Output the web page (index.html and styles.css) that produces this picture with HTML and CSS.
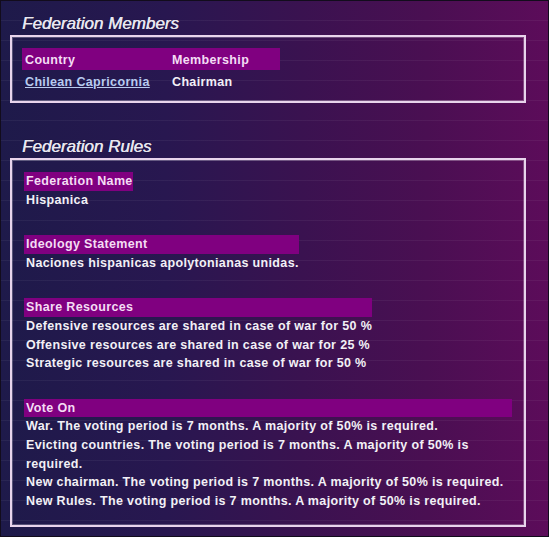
FILE: index.html
```html
<!DOCTYPE html>
<html>
<head>
<meta charset="utf-8">
<link rel="stylesheet" href="styles.css">
</head>
<body>
<div class="frame">
  <h2 class="title title-members">Federation Members</h2>
  <div class="box box-members">
    <table class="members">
      <thead>
        <tr><th class="col-country">Country</th><th class="col-member">Membership</th></tr>
      </thead>
      <tbody>
        <tr><td><a class="link" href="#">Chilean Capricornia</a></td><td>Chairman</td></tr>
      </tbody>
    </table>
  </div>

  <h2 class="title title-rules">Federation Rules</h2>
  <div class="box box-rules">
    <div class="rule">
      <div class="bar">Federation Name</div>
      <div class="line">Hispanica</div>
    </div>
    <div class="rule">
      <div class="bar">Ideology Statement</div>
      <div class="line">Naciones hispanicas apolytonianas unidas.</div>
    </div>
    <div class="rule">
      <div class="bar">Share Resources</div>
      <div class="line">Defensive resources are shared in case of war for 50 %</div>
      <div class="line">Offensive resources are shared in case of war for 25 %</div>
      <div class="line">Strategic resources are shared in case of war for 50 %</div>
    </div>
    <div class="rule">
      <div class="bar">Vote On</div>
      <div class="line">War. The voting period is 7 months. A majority of 50% is required.</div>
      <div class="line">Evicting countries. The voting period is 7 months. A majority of 50% is required.</div>
      <div class="line">New chairman. The voting period is 7 months. A majority of 50% is required.</div>
      <div class="line">New Rules. The voting period is 7 months. A majority of 50% is required.</div>
    </div>
  </div>
</div>
</body>
</html>
```

FILE: styles.css
```css
html, body {
  margin: 0;
  padding: 0;
}
body {
  background: #000;
}
.frame {
  box-sizing: border-box;
  width: 549px;
  height: 537px;
  border: 1px solid #120c1c;
  background:
    repeating-linear-gradient(to bottom, rgba(255,255,255,0) 0px, rgba(255,255,255,0) 19px, rgba(255,255,255,0.05) 19px, rgba(255,255,255,0.05) 20px),
    linear-gradient(to right, #1e1a4a 0%, #281750 30%, #3a1250 55%, #4a0f52 78%, #5c0c5a 100%);
  padding: 9px 22px 0 9px;
  font-family: "Liberation Sans", Arial, sans-serif;
  color: #ecebf2;
}
.title {
  margin: 0;
  font-size: 17px;
  font-style: italic;
  font-weight: normal;
  line-height: 22px;
  color: #e8e6f0;
  padding-left: 12px;
  text-shadow: 0.4px 0 0 #e8e6f0, 0 0 1px rgba(0,0,0,0.6);
}
.title-members {
  height: 25px;
  padding-top: 3px;
  box-sizing: border-box;
}
.title-rules {
  margin-top: 30px;
  height: 25px;
  padding-top: 3px;
  box-sizing: border-box;
}
.box {
  border: 2px solid #e8d4ec;
  box-shadow: inset 0 0 0 1px rgba(255,255,255,0.25);
}
.box-members {
  padding: 11px 10px 9px 10px;
  height: 44px;
}
.members {
  border-collapse: collapse;
  font-size: 12.5px;
  font-weight: bold;
  letter-spacing: 0.35px;
}
.members th {
  background: #800080;
  color: #f4dcf4;
  text-align: left;
  height: 22px;
  padding: 1px 0 0 3px;
  box-sizing: border-box;
}
.col-country {
  width: 147px;
}
.col-member {
  width: 111px;
}
.members td {
  height: 22px;
  padding: 2px 0 0 3px;
  box-sizing: border-box;
  color: #f2f0f6;
}
.link {
  color: #b8cbef;
  text-decoration: underline;
}
.box-rules {
  padding: 12px 12px 12px 12px;
  height: 341px;
}
.rule {
  width: fit-content;
  font-size: 12.5px;
  font-weight: bold;
  letter-spacing: 0.35px;
  line-height: 18.6px;
}
.rule + .rule {
  margin-top: 26px;
}
.bar {
  background: #800080;
  color: #f4dcf4;
  padding-left: 2px;
}
.line {
  padding-left: 2px;
  color: #f2f0f6;
}
```
